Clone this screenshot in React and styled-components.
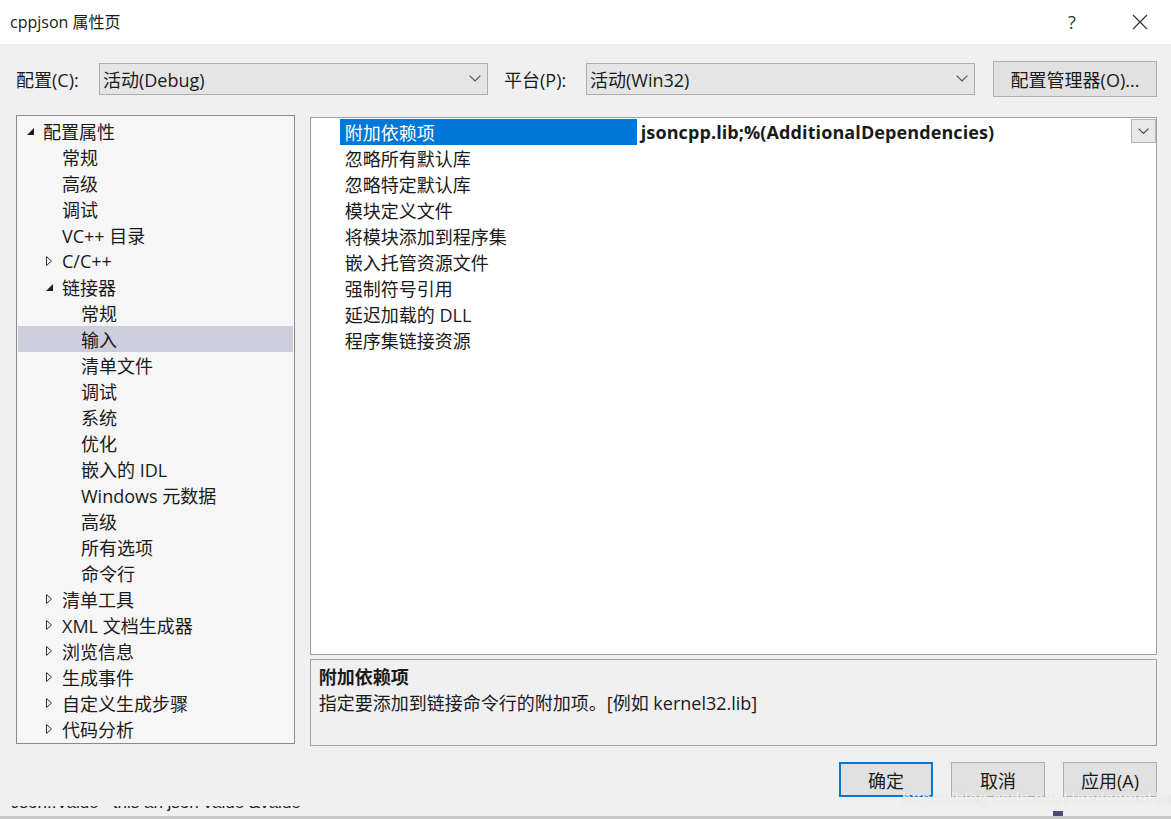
import React from 'react';
import styled, { createGlobalStyle } from 'styled-components';

const GlobalStyle = createGlobalStyle`
  html, body {
    margin: 0;
    padding: 0;
    background: #f0f0f0;
  }
  body {
    font-family: "Open Sans", "Noto Sans CJK SC", sans-serif;
    color: #1a1a1a;
  }
`;

const Dialog = styled.div`
  position: relative;
  width: 1171px;
  height: 819px;
  display: flex;
  flex-direction: column;
  overflow: hidden;
  background: #f0f0f0;
`;

const TitleBar = styled.div`
  height: 44px;
  flex: none;
  background: #fff;
  display: flex;
  align-items: center;
  padding: 0 0 0 10px;
`;

const Title = styled.div`
  flex: 1;
  font-size: 16px;
  margin-top: -2px;
`;

const TitleButton = styled.div`
  width: 46px;
  height: 44px;
  display: flex;
  align-items: center;
  justify-content: center;
  font-size: 18px;
  color: #333;
  margin-right: ${p => p.$mr || 0}px;
`;

const Body = styled.div`
  flex: 1;
  display: flex;
  flex-direction: column;
  padding: 0 14px 0 16px;
`;

const ConfigRow = styled.div`
  margin-top: 17px;
  height: 36px;
  display: flex;
  align-items: center;
`;

const Label = styled.div`
  font-size: 18px;
  width: ${p => p.$w}px;
  flex: none;
`;

const Combo = styled.div`
  width: 389px;
  height: 32px;
  box-sizing: border-box;
  border: 1px solid #adadad;
  background: #e5e5e5;
  display: flex;
  align-items: center;
  padding: 0 6px 0 3px;
  font-size: 18px;
  margin-right: ${p => p.$mr || 0}px;
`;

const ComboText = styled.span`
  flex: 1;
`;

const Button = styled.div`
  width: ${p => p.$w || 94}px;
  height: ${p => p.$h || 35}px;
  box-sizing: border-box;
  border: ${p => (p.$primary ? '2px solid #0078d7' : '1px solid #adadad')};
  background: #e1e1e1;
  display: flex;
  align-items: center;
  justify-content: center;
  font-size: 18px;
`;

const Main = styled.div`
  margin-top: 18px;
  display: flex;
  align-items: flex-start;
  gap: 15px;
`;

const Tree = styled.div`
  width: 279px;
  height: 629px;
  box-sizing: border-box;
  border: 1px solid #8a8a8a;
  background: #f6f6f6;
  padding: 2px 1px 0;
`;

const TreeRow = styled.div`
  height: 26px;
  display: flex;
  align-items: center;
  padding-left: ${p => 8 + p.$level * 19}px;
  background: ${p => (p.$selected ? '#cccedb' : 'transparent')};
  font-size: 18px;
  white-space: nowrap;
`;

const Toggle = styled.span`
  width: 17px;
  height: 26px;
  flex: none;
  display: flex;
  align-items: center;
`;

const RightCol = styled.div`
  width: 848px;
  margin-top: 2px;
  display: flex;
  flex-direction: column;
  gap: 4px;
`;

const Grid = styled.div`
  height: 538px;
  box-sizing: border-box;
  border: 1px solid #a0a0a0;
  background: #fff;
  padding-top: 1px;
`;

const GridRow = styled.div`
  height: 26px;
  display: flex;
  align-items: center;
  padding-left: 29px;
`;

const PropName = styled.div`
  width: 297px;
  height: 26px;
  flex: none;
  box-sizing: border-box;
  padding-left: 5px;
  display: flex;
  align-items: center;
  font-size: 18px;
  color: ${p => (p.$selected ? '#fff' : '#1a1a1a')};
  background: ${p => (p.$selected ? '#0078d7' : 'transparent')};
`;

const PropValue = styled.div`
  flex: 1;
  padding-left: 4px;
  font-size: 18px;
  font-weight: 700;
  letter-spacing: ${p => p.$ls}px;
  white-space: nowrap;
`;

const DropButton = styled.div`
  width: 25px;
  height: 24px;
  box-sizing: border-box;
  border: 1px solid #b4b4b4;
  background: #e8e8e8;
  display: flex;
  align-items: center;
  justify-content: center;
  align-self: flex-start;
`;

const Description = styled.div`
  height: 87px;
  box-sizing: border-box;
  border: 1px solid #a0a0a0;
  padding: 4px 8px;
`;

const DescTitle = styled.div`
  font-size: 18px;
  font-weight: 700;
  line-height: 26px;
`;

const DescText = styled.div`
  font-size: 18px;
  line-height: 26px;
`;

const Footer = styled.div`
  margin-top: 16px;
  display: flex;
  justify-content: flex-end;
  gap: 18px;
`;

const Backdrop = styled.div`
  margin-top: auto;
  height: 13px;
  overflow: hidden;
  background: #f0f0f0;
  border-bottom: 3px solid #c8c8c8;
  box-sizing: border-box;
  display: flex;
  position: relative;
`;

const BackdropText = styled.div`
  margin: -14px 0 0 11px;
  font-family: "Liberation Sans", sans-serif;
  font-size: 17px;
  line-height: 22px;
  color: #222;
  white-space: pre;
`;

const Caret = styled.div`
  position: absolute;
  left: 1053px;
  bottom: 0;
  width: 10px;
  height: 5px;
  background: #4a4a7a;
`;

const Watermark = styled.div`
  position: absolute;
  left: 902px;
  top: 789px;
  font-family: "Liberation Sans", sans-serif;
  font-size: 17px;
  color: rgba(255, 255, 255, 0.8);
  text-shadow: 0 0 1px rgba(160, 160, 160, 0.5);
  letter-spacing: 0.2px;
`;

const Chevron = ({ size = 12, color = '#555' }) => (
  <svg width={size} height={size * 0.6} viewBox="0 0 10 6">
    <polyline points="0.5,0.5 5,5 9.5,0.5" fill="none" stroke={color} strokeWidth="1" />
  </svg>
);

const Expanded = () => (
  <svg width="9" height="9" viewBox="0 0 9 9">
    <polygon points="8,1 8,8 1,8" fill="#1e1e1e" />
  </svg>
);

const Collapsed = () => (
  <svg width="8" height="12" viewBox="0 0 8 12">
    <polygon points="1.5,1.5 6.5,6 1.5,10.5" fill="none" stroke="#333" strokeWidth="1" />
  </svg>
);

const CloseIcon = () => (
  <svg width="16" height="16" viewBox="0 0 16 16">
    <path d="M1 1 L15 15 M15 1 L1 15" stroke="#333" strokeWidth="1.2" />
  </svg>
);

const treeItems = [
  { label: '配置属性', level: 0, toggle: 'open' },
  { label: '常规', level: 1 },
  { label: '高级', level: 1 },
  { label: '调试', level: 1 },
  { label: 'VC++ 目录', level: 1 },
  { label: 'C/C++', level: 1, toggle: 'closed' },
  { label: '链接器', level: 1, toggle: 'open' },
  { label: '常规', level: 2 },
  { label: '输入', level: 2, selected: true },
  { label: '清单文件', level: 2 },
  { label: '调试', level: 2 },
  { label: '系统', level: 2 },
  { label: '优化', level: 2 },
  { label: '嵌入的 IDL', level: 2 },
  { label: 'Windows 元数据', level: 2 },
  { label: '高级', level: 2 },
  { label: '所有选项', level: 2 },
  { label: '命令行', level: 2 },
  { label: '清单工具', level: 1, toggle: 'closed' },
  { label: 'XML 文档生成器', level: 1, toggle: 'closed' },
  { label: '浏览信息', level: 1, toggle: 'closed' },
  { label: '生成事件', level: 1, toggle: 'closed' },
  { label: '自定义生成步骤', level: 1, toggle: 'closed' },
  { label: '代码分析', level: 1, toggle: 'closed' },
];

const props = [
  '附加依赖项',
  '忽略所有默认库',
  '忽略特定默认库',
  '模块定义文件',
  '将模块添加到程序集',
  '嵌入托管资源文件',
  '强制符号引用',
  '延迟加载的 DLL',
  '程序集链接资源',
];

export default function App() {
  return (
    <>
      <GlobalStyle />
      <Dialog>
        <TitleBar>
          <Title>cppjson 属性页</Title>
          <TitleButton $mr={22}>?</TitleButton>
          <TitleButton $mr={8}>
            <CloseIcon />
          </TitleButton>
        </TitleBar>
        <Body>
          <ConfigRow>
            <Label $w={83}>配置(C):</Label>
            <Combo $mr={16}>
              <ComboText>活动(Debug)</ComboText>
              <Chevron />
            </Combo>
            <Label $w={82}>平台(P):</Label>
            <Combo $mr={18}>
              <ComboText>活动(Win32)</ComboText>
              <Chevron />
            </Combo>
            <Button $w={164} $h={36}>配置管理器(O)...</Button>
          </ConfigRow>
          <Main>
            <Tree>
              {treeItems.map((item, i) => (
                <TreeRow key={i} $level={item.level} $selected={item.selected}>
                  <Toggle>
                    {item.toggle === 'open' && <Expanded />}
                    {item.toggle === 'closed' && <Collapsed />}
                  </Toggle>
                  {item.label}
                </TreeRow>
              ))}
            </Tree>
            <RightCol>
              <Grid>
                {props.map((name, i) => (
                  <GridRow key={name}>
                    <PropName $selected={i === 0}>{name}</PropName>
                    {i === 0 && (
                      <>
                        <PropValue $ls={0.1}>jsoncpp.lib;%(AdditionalDependencies)</PropValue>
                        <DropButton>
                          <Chevron size={11} color="#444" />
                        </DropButton>
                      </>
                    )}
                  </GridRow>
                ))}
              </Grid>
              <Description>
                <DescTitle>附加依赖项</DescTitle>
                <DescText>指定要添加到链接命令行的附加项。[例如 kernel32.lib]</DescText>
              </Description>
            </RightCol>
          </Main>
          <Footer>
            <Button $primary>确定</Button>
            <Button>取消</Button>
            <Button>应用(A)</Button>
          </Footer>
        </Body>
        <Backdrop>
          <BackdropText>Json::Value   this an json value &amp;value</BackdropText>
          <Caret />
        </Backdrop>
        <Watermark>https://blog.csdn.net/HandsomeHong</Watermark>
      </Dialog>
    </>
  );
}
